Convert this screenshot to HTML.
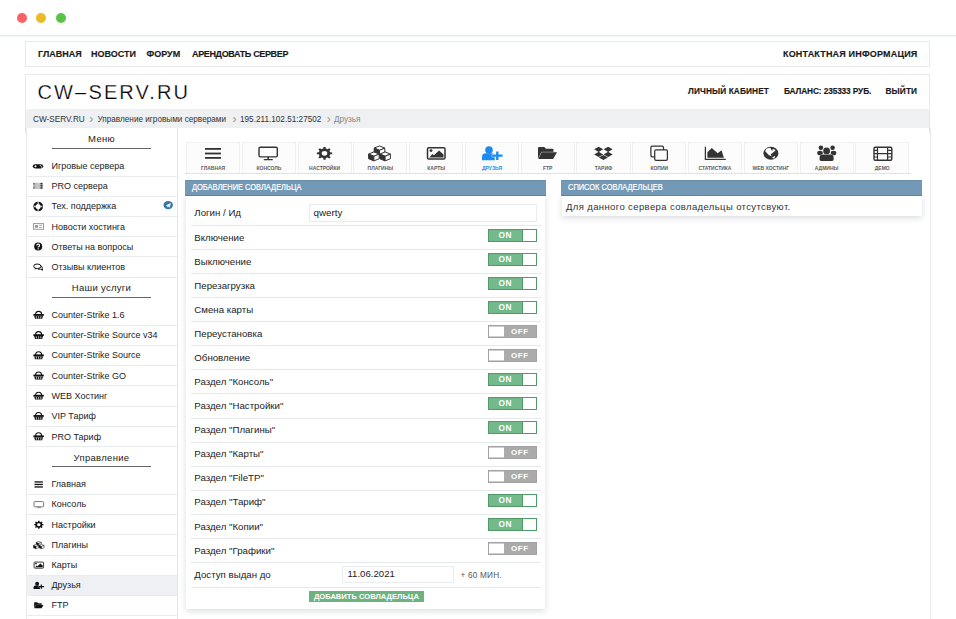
<!DOCTYPE html>
<html><head><meta charset="utf-8">
<style>
*{box-sizing:border-box;margin:0;padding:0}
html,body{width:956px;height:619px;overflow:hidden;background:#fff;font-family:"Liberation Sans",sans-serif;color:#222}
.a{position:absolute;white-space:nowrap}
.dot{position:absolute;top:12.6px;width:10.4px;height:10.4px;border-radius:50%}
.nv{position:absolute;font-weight:bold;font-size:9px;color:#1a1a1a;white-space:nowrap;line-height:10px;-webkit-text-stroke:0.15px #1a1a1a}
.hl{position:absolute;font-weight:bold;font-size:8.3px;color:#1a1a1a;white-space:nowrap;line-height:10px;letter-spacing:0.1px;-webkit-text-stroke:0.15px #1a1a1a}
.bc{position:absolute;font-size:8.2px;color:#333;white-space:nowrap;line-height:10px}
.sh{position:absolute;left:26px;width:151px;text-align:center;font-size:9.5px;letter-spacing:0.3px;color:#222;line-height:12px}
.ul{position:absolute;left:52px;width:99px;height:1.5px;background:#666}
.st{position:absolute;left:51.5px;font-size:9px;color:#222;white-space:nowrap;line-height:10px}
.tab{position:absolute;top:142px;width:54.2px;height:30.6px;background:#fcfcfc;border:1px solid #f0f0f0;border-bottom:none}
.tl{position:absolute;top:165px;font-size:5px;font-weight:bold;color:#555;text-align:center;width:54.2px;line-height:6px}
.ph{position:absolute;top:180.3px;height:15.6px;background:#7399b6;border-top:1px solid #6a90ad;border-bottom:1px solid #5c83a2;color:#fff;white-space:nowrap}
.ph span{position:absolute;left:7px;top:0.2px;font-size:8.4px;line-height:13px;transform:scaleX(0.89);transform-origin:0 0;-webkit-text-stroke:0.2px #fff}
.pb{position:absolute;background:#fff;box-shadow:0 1.5px 6px rgba(30,45,60,0.17)}
.rl{position:absolute;left:194.3px;font-size:9.7px;color:#222;white-space:nowrap;line-height:10px}
.sep{position:absolute;left:191px;width:350px;height:1px;background:#e6e9ec}
.tg{position:absolute;left:488px;width:49px;height:13px}
.on{background:#73b98a;border:1px solid #4f9a66}
.on .k{position:absolute;right:0;top:0;width:14px;height:100%;background:#fff;border-left:1px solid #4f9a66}
.on span{position:absolute;left:-1px;top:0.3px;width:34px;text-align:center;color:#fff;font-weight:bold;font-size:8.3px;letter-spacing:0.7px;line-height:11px;text-indent:0.7px}
.off{background:#ababab;border:1px solid #a2a2a2}
.off .k{position:absolute;left:0;top:0;width:14.5px;height:100%;background:#fff;border-top:1px solid #d0d0d0;border-bottom:1px solid #d0d0d0}
.off span{position:absolute;right:0;width:33px;text-align:center;color:#fff;font-weight:bold;font-size:8px;letter-spacing:0.6px;line-height:11px;text-indent:0.6px}
.inp{position:absolute;background:#fff;border:1px solid #e9ecf0}
</style></head>
<body>
<div class="dot" style="left:16.8px;background:#fe6163"></div>
<div class="dot" style="left:35.8px;background:#ecbb22"></div>
<div class="dot" style="left:55.9px;background:#5ac544"></div>
<div class="a" style="left:0;top:35px;width:956px;height:1px;background:#e6e7e9"></div>
<div class="a" style="left:0;top:36px;width:956px;height:1px;background:#f0f5fa"></div>

<div class="a" style="left:25px;top:41px;width:905px;height:26px;border:1px solid #e9e9e9"></div>
<span class="nv" style="left:38px;top:48.6px">ГЛАВНАЯ</span>
<span class="nv" style="left:91px;top:48.6px">НОВОСТИ</span>
<span class="nv" style="left:146.5px;top:48.6px">ФОРУМ</span>
<span class="nv" style="left:192px;top:48.6px;letter-spacing:-0.35px">АРЕНДОВАТЬ СЕРВЕР</span>
<span class="nv" style="left:783px;top:48.6px;letter-spacing:0.18px">КОНТАКТНАЯ ИНФОРМАЦИЯ</span>

<div class="a" style="left:25px;top:74px;width:905px;height:60px;border:1px solid #e9e9e9;border-bottom:none"></div>
<div class="a" style="left:26px;top:128px;width:905px;height:600px;border:1px solid #e9e9e9;border-top:none"></div>
<span class="a" style="left:37.5px;top:80px;font-size:20px;letter-spacing:2.15px;color:#000;line-height:24px;-webkit-text-stroke:0.25px #fff">CW–SERV.RU</span>
<span class="hl" style="left:688px;top:86px">ЛИЧНЫЙ КАБИНЕТ</span>
<span class="hl" style="left:784px;top:86px;letter-spacing:-0.12px">БАЛАНС: 235333 РУБ.</span>
<span class="hl" style="left:885.5px;top:86px">ВЫЙТИ</span>

<div class="a" style="left:26px;top:109px;width:903px;height:19px;background:#eef0f1"></div>
<span class="bc" style="left:33px;top:114.5px">CW-SERV.RU</span>
<span class="bc" style="left:89.3px;top:114.5px;color:#999;font-size:12px;top:113.5px">&#8250;</span>
<span class="bc" style="left:97.5px;top:114.5px">Управление игровыми серверами</span>
<span class="bc" style="left:232.5px;top:114.5px;color:#999;font-size:12px;top:113.5px">&#8250;</span>
<span class="bc" style="left:240px;top:114.5px">195.211.102.51:27502</span>
<span class="bc" style="left:326.8px;top:114.5px;color:#999;font-size:12px;top:113.5px">&#8250;</span>
<span class="bc" style="left:334px;top:114.5px;color:#888">Друзья</span>

<div class="a" style="left:177px;top:128px;width:1px;height:500px;background:#e6e6e6"></div>

<div class="sh" style="top:133.3px">Меню</div>
<div class="ul" style="top:147.5px"></div>
<div class="a" style="left:26px;top:175.7px;width:151px;height:1px;background:#e9edf0"></div>
<span class="st" style="top:161px">Игровые сервера</span>
<div class="a" style="left:26px;top:195.9px;width:151px;height:1px;background:#e9edf0"></div>
<span class="st" style="top:181px">PRO сервера</span>
<div class="a" style="left:26px;top:216.1px;width:151px;height:1px;background:#e9edf0"></div>
<span class="st" style="top:201px">Тех. поддержка</span>
<div class="a" style="left:26px;top:236.2px;width:151px;height:1px;background:#e9edf0"></div>
<span class="st" style="top:222px">Новости хостинга</span>
<div class="a" style="left:26px;top:256.3px;width:151px;height:1px;background:#e9edf0"></div>
<span class="st" style="top:242px">Ответы на вопросы</span>
<div class="a" style="left:26px;top:276.5px;width:151px;height:1px;background:#e9edf0"></div>
<span class="st" style="top:262px">Отзывы клиентов</span>
<div class="sh" style="top:282.3px">Наши услуги</div>
<div class="ul" style="top:296.5px"></div>
<div class="a" style="left:26px;top:324.8px;width:151px;height:1px;background:#e9edf0"></div>
<span class="st" style="top:310px">Counter-Strike 1.6</span>
<div class="a" style="left:26px;top:345.0px;width:151px;height:1px;background:#e9edf0"></div>
<span class="st" style="top:330px">Counter-Strike Source v34</span>
<div class="a" style="left:26px;top:365.2px;width:151px;height:1px;background:#e9edf0"></div>
<span class="st" style="top:350px">Counter-Strike Source</span>
<div class="a" style="left:26px;top:385.4px;width:151px;height:1px;background:#e9edf0"></div>
<span class="st" style="top:371px">Counter-Strike GO</span>
<div class="a" style="left:26px;top:405.6px;width:151px;height:1px;background:#e9edf0"></div>
<span class="st" style="top:391px">WEB Хостинг</span>
<div class="a" style="left:26px;top:425.9px;width:151px;height:1px;background:#e9edf0"></div>
<span class="st" style="top:411px">VIP Тариф</span>
<div class="a" style="left:26px;top:446.2px;width:151px;height:1px;background:#e9edf0"></div>
<span class="st" style="top:432px">PRO Тариф</span>
<div class="sh" style="top:452.0px">Управление</div>
<div class="ul" style="top:465.9px"></div>
<div class="a" style="left:26px;top:493.9px;width:151px;height:1px;background:#e9edf0"></div>
<span class="st" style="top:479px">Главная</span>
<div class="a" style="left:26px;top:514.1px;width:151px;height:1px;background:#e9edf0"></div>
<span class="st" style="top:499px">Консоль</span>
<div class="a" style="left:26px;top:534.3px;width:151px;height:1px;background:#e9edf0"></div>
<span class="st" style="top:520px">Настройки</span>
<div class="a" style="left:26px;top:554.5px;width:151px;height:1px;background:#e9edf0"></div>
<span class="st" style="top:540px">Плагины</span>
<div class="a" style="left:26px;top:574.7px;width:151px;height:1px;background:#e9edf0"></div>
<span class="st" style="top:560px">Карты</span>
<div class="a" style="left:26px;top:575.7px;width:151px;height:19.2px;background:#eef0f4"></div>
<div class="a" style="left:26px;top:594.9px;width:151px;height:1px;background:#e9edf0"></div>
<span class="st" style="top:580px">Друзья</span>
<div class="a" style="left:26px;top:614.8px;width:151px;height:1px;background:#e9edf0"></div>
<span class="st" style="top:600px">FTP</span>
<div class="tab" style="left:186.0px"></div>
<div class="tl" style="left:186.0px;color:#606060">ГЛАВНАЯ</div>
<div class="tab" style="left:241.8px"></div>
<div class="tl" style="left:241.8px;color:#606060">КОНСОЛЬ</div>
<div class="tab" style="left:297.5px"></div>
<div class="tl" style="left:297.5px;color:#606060">НАСТРОЙКИ</div>
<div class="tab" style="left:353.3px"></div>
<div class="tl" style="left:353.3px;color:#606060">ПЛАГИНЫ</div>
<div class="tab" style="left:409.1px"></div>
<div class="tl" style="left:409.1px;color:#606060">КАРТЫ</div>
<div class="tab" style="left:464.9px"></div>
<div class="tl" style="left:464.9px;color:#2a8de3">ДРУЗЬЯ</div>
<div class="tab" style="left:520.6px"></div>
<div class="tl" style="left:520.6px;color:#606060">FTP</div>
<div class="tab" style="left:576.4px"></div>
<div class="tl" style="left:576.4px;color:#606060">ТАРИФ</div>
<div class="tab" style="left:632.2px"></div>
<div class="tl" style="left:632.2px;color:#606060">КОПИИ</div>
<div class="tab" style="left:687.9px"></div>
<div class="tl" style="left:687.9px;color:#606060">СТАТИСТИКА</div>
<div class="tab" style="left:743.7px"></div>
<div class="tl" style="left:743.7px;color:#606060">WEB ХОСТИНГ</div>
<div class="tab" style="left:799.5px"></div>
<div class="tl" style="left:799.5px;color:#606060">АДМИНЫ</div>
<div class="tab" style="left:855.2px"></div>
<div class="tl" style="left:855.2px;color:#606060">ДЕМО</div>
<div class="a" style="left:185px;top:172.6px;width:725.8px;height:1.6px;background:#e2e2e2"></div>
<svg class="a" style="left:0;top:0;width:956px;height:619px" viewBox="0 0 956 619"><g style="color:#333"><g fill="currentColor"><rect x="205" y="148.0" width="16" height="1.8"/><rect x="205" y="152.6" width="16" height="1.8"/><rect x="205" y="157.0" width="16" height="1.8"/></g></g><g style="color:#333"><rect x="259" y="147.3" width="18.3" height="9.6" rx="1.3" fill="none" stroke="currentColor" stroke-width="1.4"/><rect x="267.4" y="156.9" width="1.6" height="2.3" fill="currentColor"/><rect x="263.7" y="158.9" width="9.2" height="1.4" rx="0.6" fill="currentColor"/></g><g style="color:#333"><path transform="translate(324.5 153.3) scale(1.17 0.97) translate(-324.5 -153.3)" d="M323.41 148.42 L323.57 146.77 L325.43 146.77 L325.59 148.42 L327.18 149.08 L328.46 148.02 L329.78 149.34 L328.72 150.62 L329.38 152.21 L331.03 152.37 L331.03 154.23 L329.38 154.39 L328.72 155.98 L329.78 157.26 L328.46 158.58 L327.18 157.52 L325.59 158.18 L325.43 159.83 L323.57 159.83 L323.41 158.18 L321.82 157.52 L320.54 158.58 L319.22 157.26 L320.28 155.98 L319.62 154.39 L317.97 154.23 L317.97 152.37 L319.62 152.21 L320.28 150.62 L319.22 149.34 L320.54 148.02 L321.82 149.08 Z M326.90 153.30 A2.4 2.4 0 1 0 322.10 153.30 A2.4 2.4 0 1 0 326.90 153.30 Z" fill="currentColor" fill-rule="evenodd"/></g><g style="color:#333"><path d="M379.5 145.9 L384.8 148.1 L379.5 150.3 L374.2 148.1 Z" fill="#fff" stroke="currentColor" stroke-width="1.0" stroke-linejoin="round"/><path d="M374.2 148.1 L379.5 150.3 L379.5 154.9 L374.2 152.7 Z" fill="currentColor" stroke="currentColor" stroke-width="1.0" stroke-linejoin="round"/><path d="M379.5 150.3 L384.8 148.1 L384.8 152.7 L379.5 154.9 Z" fill="#fff" stroke="currentColor" stroke-width="1.0" stroke-linejoin="round"/><path d="M373.9 151.9 L379.2 154.1 L373.9 156.3 L368.59999999999997 154.1 Z" fill="#fff" stroke="currentColor" stroke-width="1.0" stroke-linejoin="round"/><path d="M368.59999999999997 154.1 L373.9 156.3 L373.9 160.9 L368.59999999999997 158.7 Z" fill="currentColor" stroke="currentColor" stroke-width="1.0" stroke-linejoin="round"/><path d="M373.9 156.3 L379.2 154.1 L379.2 158.7 L373.9 160.9 Z" fill="#fff" stroke="currentColor" stroke-width="1.0" stroke-linejoin="round"/><path d="M385.1 151.9 L390.40000000000003 154.1 L385.1 156.3 L379.8 154.1 Z" fill="#fff" stroke="currentColor" stroke-width="1.0" stroke-linejoin="round"/><path d="M379.8 154.1 L385.1 156.3 L385.1 160.9 L379.8 158.7 Z" fill="currentColor" stroke="currentColor" stroke-width="1.0" stroke-linejoin="round"/><path d="M385.1 156.3 L390.40000000000003 154.1 L390.40000000000003 158.7 L385.1 160.9 Z" fill="#fff" stroke="currentColor" stroke-width="1.0" stroke-linejoin="round"/></g><g style="color:#333"><rect x="427.5" y="147.7" width="17.5" height="11.3" rx="1.3" fill="none" stroke="currentColor" stroke-width="1.5"/><circle cx="431" cy="150.6" r="1.45" fill="currentColor"/><path d="M429.3 157.4 L432.4 154.1 L433.9 155.2 L439.1 150.5 L443.5 154.4 L443.5 157.4 Z" fill="currentColor"/></g><g style="color:#1a8cf0"><g fill="currentColor"><circle cx="489" cy="150" r="3.8"/><path d="M482 160.3 L482 157.2 Q482 153.4 485.8 153.3 L491.5 153.3 Q494.8 153.4 494.8 156.5 L494.8 160.3 Z"/></g><path d="M496.1 151.5 h2.4 v2.9 h4.1 v2.4 h-4.1 v3.2 h-2.4 v-3.2 h-3.9 v-2.4 h3.9 Z" fill="currentColor" stroke="#fff" stroke-width="0.9" paint-order="stroke"/></g><g style="color:#333"><path d="M538 159 L538 148 Q538 146.9 539.1 146.9 L544.3 146.9 L546 148.7 L552.4 148.7 Q553.5 148.7 553.5 149.9 L553.5 152.2 L542 152.2 L538.4 159 Z" fill="currentColor"/><path d="M541.6 152.3 L557.1 152.3 L553.1 159.1 L538.4 159.1 Z" fill="currentColor" stroke="#fff" stroke-width="0.8" paint-order="stroke"/></g><g style="color:#333"><g fill="currentColor" transform="translate(603.4 0) scale(1.1 1) translate(-603.4 0)"><path d="M595 149.3 L599.1 146.7 L603.2 149.3 L599.1 151.9 Z"/><path d="M603.6 149.3 L607.7 146.7 L611.8 149.3 L607.7 151.9 Z"/><path d="M595 154.0 L599.1 151.4 L603.2 154.0 L599.1 156.6 Z" transform="translate(0 0.4)"/><path d="M603.6 154.0 L607.7 151.4 L611.8 154.0 L607.7 156.6 Z" transform="translate(0 0.4)"/><path d="M599.3 157.6 L603.4 155.0 L607.5 157.6 L603.4 160.1 Z"/></g></g><g style="color:#333"><rect x="650.9" y="146.2" width="12.6" height="10.7" rx="1.3" fill="none" stroke="currentColor" stroke-width="1.25"/><rect x="654.7" y="149.9" width="12.7" height="10.4" rx="1.3" fill="#fcfcfc" stroke="currentColor" stroke-width="1.25"/></g><g style="color:#333"><path d="M705.4 146.7 V159.3 H725.8" fill="none" stroke="currentColor" stroke-width="1.3"/><path d="M707.4 157.8 L707.4 152.3 L711.8 148.1 L717.7 153.2 L721.5 150.2 L723.9 157.8 Z" fill="currentColor"/></g><g style="color:#333"><ellipse cx="770.9" cy="153.25" rx="7.5" ry="6.5" fill="currentColor"/><path d="M765.2 151.2 L766.2 148.8 L769.6 147.8 L771 148.4 L771.2 150.1 L772.7 150.7 L772.5 148.9 L774.6 149.5 L775.5 150.6 L771.9 153.4 L770.6 154.5 L771.8 156.4 L768.7 154.9 Z" fill="#fcfcfc"/><path d="M772 157.5 L775.3 155.8 L774.2 158.7 Z" fill="#fcfcfc"/></g><g style="color:#333"><g fill="currentColor"><circle cx="820.9" cy="147.7" r="2.3"/><circle cx="832.6" cy="147.7" r="2.3"/><ellipse cx="820" cy="153" rx="2.8" ry="2.3"/><ellipse cx="833.5" cy="153" rx="2.8" ry="2.3"/></g><g fill="currentColor" stroke="#fcfcfc" stroke-width="1" paint-order="stroke"><circle cx="826.6" cy="151" r="3.4"/><path d="M819.6 159.5 L819.6 157.6 Q819.6 154.6 822.8 154.6 L830.4 154.6 Q833.6 154.6 833.6 157.6 L833.6 159.5 Q833.6 160.9 832.2 160.9 L821 160.9 Q819.6 160.9 819.6 159.5 Z"/></g></g><g style="color:#333"><rect x="874" y="147.3" width="17.8" height="12.9" rx="1.2" fill="none" stroke="currentColor" stroke-width="1.4"/><path d="M877.5 147.3 V160.2 M887.6 147.3 V160.2 M877.5 153.7 H887.6 M874 150.4 H877.5 M874 153.7 H877.5 M874 157.0 H877.5 M887.6 150.4 H891.8 M887.6 153.7 H891.8 M887.6 157.0 H891.8" stroke="currentColor" stroke-width="1.2"/></g><path d="M35.2 164.2 H40.8 Q43.2 164.2 43.2 166.3 Q43.2 168.4 40.8 168.4 H35.2 Q32.8 168.4 32.8 166.3 Q32.8 164.2 35.2 164.2 Z" fill="#111"/><path d="M34.3 166.3 H36.7 M35.5 165.2 V167.4" stroke="#fff" stroke-width="0.8"/><circle cx="40.3" cy="165.7" r="0.6" fill="#fff"/><circle cx="41.6" cy="166.9" r="0.6" fill="#fff"/><rect x="33.2" y="182.9" width="9.8" height="5.8" fill="#a8a8a8"/><rect x="35.2" y="182.9" width="5.2" height="5.8" fill="#c4c4c4"/><g fill="#222"><rect x="40.6" y="182.9" width="1.6" height="1.3"/><rect x="40.6" y="185.2" width="1.6" height="1.3"/><rect x="40.6" y="187.4" width="1.6" height="1.3"/></g><g fill="#666"><rect x="33.2" y="182.9" width="1.2" height="1.3"/><rect x="33.2" y="187.4" width="1.2" height="1.3"/></g><circle cx="38.2" cy="206.5" r="3.7" fill="none" stroke="#111" stroke-width="2.3"/><path d="M38.2 202.2 V204.3 M38.2 208.7 V210.8 M33.9 206.5 H36 M40.4 206.5 H42.5" stroke="#c8c8c8" stroke-width="1.6"/><rect x="33.5" y="223.6" width="10" height="5.7" fill="none" stroke="#9a9a9a" stroke-width="1"/><rect x="35" y="225" width="3" height="2.8" fill="#9a9a9a"/><path d="M39 225.3 H42 M39 227.4 H42" stroke="#9a9a9a" stroke-width="0.8"/><circle cx="38.2" cy="246.6" r="4" fill="#111"/><path d="M36.8 245.6 Q36.8 244.1 38.2 244.1 Q39.6 244.1 39.6 245.4 Q39.6 246.3 38.2 246.9 V247.6" fill="none" stroke="#fff" stroke-width="1.1"/><rect x="37.6" y="248.3" width="1.2" height="1.1" fill="#fff"/><ellipse cx="37.3" cy="266.3" rx="3.6" ry="2.3" fill="none" stroke="#111" stroke-width="1"/><path d="M35.2 268.3 L34.4 269.8 L36.8 268.6" fill="#111"/><path d="M40.6 265.6 Q42.6 266.6 42.2 268.3 L42.6 270.2 L40.6 269.2 Q39.2 269.5 38 269" fill="none" stroke="#111" stroke-width="1"/><path d="M35.6 314.6 Q35.6 311.40000000000003 38.6 311.40000000000003 Q41.6 311.40000000000003 41.6 314.6" fill="none" stroke="#111" stroke-width="1.1"/><rect x="33.4" y="314.00000000000006" width="10.4" height="1.8" fill="#111"/><path d="M34.2 315.8 H43 L42.2 318.8 H35 Z" fill="#111"/><path d="M36.4 316.20000000000005 V318.40000000000003 M38.6 316.20000000000005 V318.40000000000003 M40.8 316.20000000000005 V318.40000000000003" stroke="#fff" stroke-width="0.7"/><path d="M35.6 334.79999999999995 Q35.6 331.59999999999997 38.6 331.59999999999997 Q41.6 331.59999999999997 41.6 334.79999999999995" fill="none" stroke="#111" stroke-width="1.1"/><rect x="33.4" y="334.2" width="10.4" height="1.8" fill="#111"/><path d="M34.2 335.99999999999994 H43 L42.2 338.99999999999994 H35 Z" fill="#111"/><path d="M36.4 336.4 V338.59999999999997 M38.6 336.4 V338.59999999999997 M40.8 336.4 V338.59999999999997" stroke="#fff" stroke-width="0.7"/><path d="M35.6 355.0 Q35.6 351.8 38.6 351.8 Q41.6 351.8 41.6 355.0" fill="none" stroke="#111" stroke-width="1.1"/><rect x="33.4" y="354.40000000000003" width="10.4" height="1.8" fill="#111"/><path d="M34.2 356.2 H43 L42.2 359.2 H35 Z" fill="#111"/><path d="M36.4 356.6 V358.8 M38.6 356.6 V358.8 M40.8 356.6 V358.8" stroke="#fff" stroke-width="0.7"/><path d="M35.6 375.19999999999993 Q35.6 371.99999999999994 38.6 371.99999999999994 Q41.6 371.99999999999994 41.6 375.19999999999993" fill="none" stroke="#111" stroke-width="1.1"/><rect x="33.4" y="374.59999999999997" width="10.4" height="1.8" fill="#111"/><path d="M34.2 376.3999999999999 H43 L42.2 379.3999999999999 H35 Z" fill="#111"/><path d="M36.4 376.79999999999995 V378.99999999999994 M38.6 376.79999999999995 V378.99999999999994 M40.8 376.79999999999995 V378.99999999999994" stroke="#fff" stroke-width="0.7"/><path d="M35.6 395.4 Q35.6 392.2 38.6 392.2 Q41.6 392.2 41.6 395.4" fill="none" stroke="#111" stroke-width="1.1"/><rect x="33.4" y="394.8" width="10.4" height="1.8" fill="#111"/><path d="M34.2 396.59999999999997 H43 L42.2 399.59999999999997 H35 Z" fill="#111"/><path d="M36.4 397.0 V399.2 M38.6 397.0 V399.2 M40.8 397.0 V399.2" stroke="#fff" stroke-width="0.7"/><path d="M35.6 415.65 Q35.6 412.45 38.6 412.45 Q41.6 412.45 41.6 415.65" fill="none" stroke="#111" stroke-width="1.1"/><rect x="33.4" y="415.05" width="10.4" height="1.8" fill="#111"/><path d="M34.2 416.84999999999997 H43 L42.2 419.84999999999997 H35 Z" fill="#111"/><path d="M36.4 417.25 V419.45 M38.6 417.25 V419.45 M40.8 417.25 V419.45" stroke="#fff" stroke-width="0.7"/><path d="M35.6 435.94999999999993 Q35.6 432.74999999999994 38.6 432.74999999999994 Q41.6 432.74999999999994 41.6 435.94999999999993" fill="none" stroke="#111" stroke-width="1.1"/><rect x="33.4" y="435.34999999999997" width="10.4" height="1.8" fill="#111"/><path d="M34.2 437.1499999999999 H43 L42.2 440.1499999999999 H35 Z" fill="#111"/><path d="M36.4 437.54999999999995 V439.74999999999994 M38.6 437.54999999999995 V439.74999999999994 M40.8 437.54999999999995 V439.74999999999994" stroke="#fff" stroke-width="0.7"/><g fill="#111"><rect x="34.5" y="481.3" width="8.4" height="1.3"/><rect x="34.5" y="483.8" width="8.4" height="1.3"/><rect x="34.5" y="486.3" width="8.4" height="1.3"/></g><rect x="34" y="501.6" width="9.6" height="5.2" rx="0.8" fill="none" stroke="#777" stroke-width="1"/><rect x="38.4" y="506.8" width="0.9" height="0.9" fill="#777"/><rect x="36.8" y="507.4" width="4.1" height="0.7" fill="#777"/><g style="color:#111" transform="translate(38.8 524.70) scale(0.62) translate(-324.5 -153.3)"><path transform="translate(324.5 153.3) scale(1.17 0.97) translate(-324.5 -153.3)" d="M323.41 148.42 L323.57 146.77 L325.43 146.77 L325.59 148.42 L327.18 149.08 L328.46 148.02 L329.78 149.34 L328.72 150.62 L329.38 152.21 L331.03 152.37 L331.03 154.23 L329.38 154.39 L328.72 155.98 L329.78 157.26 L328.46 158.58 L327.18 157.52 L325.59 158.18 L325.43 159.83 L323.57 159.83 L323.41 158.18 L321.82 157.52 L320.54 158.58 L319.22 157.26 L320.28 155.98 L319.62 154.39 L317.97 154.23 L317.97 152.37 L319.62 152.21 L320.28 150.62 L319.22 149.34 L320.54 148.02 L321.82 149.08 Z M326.90 153.30 A2.4 2.4 0 1 0 322.10 153.30 A2.4 2.4 0 1 0 326.90 153.30 Z" fill="currentColor" fill-rule="evenodd"/></g><g style="color:#111" transform="translate(38.8 544.90) scale(0.49) translate(-379.5 -153.0)"><path d="M379.5 145.9 L384.8 148.1 L379.5 150.3 L374.2 148.1 Z" fill="#fff" stroke="currentColor" stroke-width="1.0" stroke-linejoin="round"/><path d="M374.2 148.1 L379.5 150.3 L379.5 154.9 L374.2 152.7 Z" fill="currentColor" stroke="currentColor" stroke-width="1.0" stroke-linejoin="round"/><path d="M379.5 150.3 L384.8 148.1 L384.8 152.7 L379.5 154.9 Z" fill="#fff" stroke="currentColor" stroke-width="1.0" stroke-linejoin="round"/><path d="M373.9 151.9 L379.2 154.1 L373.9 156.3 L368.59999999999997 154.1 Z" fill="#fff" stroke="currentColor" stroke-width="1.0" stroke-linejoin="round"/><path d="M368.59999999999997 154.1 L373.9 156.3 L373.9 160.9 L368.59999999999997 158.7 Z" fill="currentColor" stroke="currentColor" stroke-width="1.0" stroke-linejoin="round"/><path d="M373.9 156.3 L379.2 154.1 L379.2 158.7 L373.9 160.9 Z" fill="#fff" stroke="currentColor" stroke-width="1.0" stroke-linejoin="round"/><path d="M385.1 151.9 L390.40000000000003 154.1 L385.1 156.3 L379.8 154.1 Z" fill="#fff" stroke="currentColor" stroke-width="1.0" stroke-linejoin="round"/><path d="M379.8 154.1 L385.1 156.3 L385.1 160.9 L379.8 158.7 Z" fill="currentColor" stroke="currentColor" stroke-width="1.0" stroke-linejoin="round"/><path d="M385.1 156.3 L390.40000000000003 154.1 L390.40000000000003 158.7 L385.1 160.9 Z" fill="#fff" stroke="currentColor" stroke-width="1.0" stroke-linejoin="round"/></g><g style="color:#111" transform="translate(38.8 565.10) scale(0.54) translate(-436.2 -153.3)"><rect x="427.5" y="147.7" width="17.5" height="11.3" rx="1.3" fill="none" stroke="currentColor" stroke-width="1.5"/><circle cx="431" cy="150.6" r="1.45" fill="currentColor"/><path d="M429.3 157.4 L432.4 154.1 L433.9 155.2 L439.1 150.5 L443.5 154.4 L443.5 157.4 Z" fill="currentColor"/></g><g style="color:#111" transform="translate(38.8 585.30) scale(0.51) translate(-492.3 -153.0)"><g fill="currentColor"><circle cx="489" cy="150" r="3.8"/><path d="M482 160.3 L482 157.2 Q482 153.4 485.8 153.3 L491.5 153.3 Q494.8 153.4 494.8 156.5 L494.8 160.3 Z"/></g><path d="M496.1 151.5 h2.4 v2.9 h4.1 v2.4 h-4.1 v3.2 h-2.4 v-3.2 h-3.9 v-2.4 h3.9 Z" fill="currentColor" stroke="#fff" stroke-width="0.9" paint-order="stroke"/></g><g style="color:#111" transform="translate(38.8 605.35) scale(0.49) translate(-547.5 -153.0)"><path d="M538 159 L538 148 Q538 146.9 539.1 146.9 L544.3 146.9 L546 148.7 L552.4 148.7 Q553.5 148.7 553.5 149.9 L553.5 152.2 L542 152.2 L538.4 159 Z" fill="currentColor"/><path d="M541.6 152.3 L557.1 152.3 L553.1 159.1 L538.4 159.1 Z" fill="currentColor" stroke="#fff" stroke-width="0.8" paint-order="stroke"/></g><ellipse cx="168.2" cy="205.1" rx="4.75" ry="4.1" fill="#3776ab"/><path d="M165.8 205.4 L170.8 202.9 L169.8 207.6 L168.1 206.5 L167.3 207.5 L167.1 206 Z" fill="#fff"/></svg>
<div class="pb" style="left:186.3px;top:195px;width:358.8px;height:414.2px"></div>
<div class="ph" style="left:185.2px;width:360.7px;"><span>ДОБАВЛЕНИЕ СОВЛАДЕЛЬЦА</span></div>
<div class="pb" style="left:561.5px;top:195px;width:360.5px;height:21.3px"></div>
<div class="ph" style="left:561px;width:361px;"><span>СПИСОК СОВЛАДЕЛЬЦЕВ</span></div>
<span class="a" style="left:566px;top:202px;font-size:9.5px;letter-spacing:0.38px;color:#333;line-height:10px">Для данного сервера совладельцы отсутсвуют.</span>
<span class="rl" style="top:208px">Логин / Ид</span>
<div class="inp" style="left:309px;top:204px;width:228px;height:17.5px"></div>
<span class="a" style="left:313.5px;top:207.5px;font-size:9.8px;color:#222;line-height:10px">qwerty</span>
<div class="sep" style="top:225.0px"></div>
<span class="rl" style="top:232.6px">Включение</span>
<div class="tg on" style="top:228.9px"><span>ON</span><div class="k"></div></div>
<div class="sep" style="top:249.3px"></div>
<span class="rl" style="top:256.9px">Выключение</span>
<div class="tg on" style="top:253.2px"><span>ON</span><div class="k"></div></div>
<div class="sep" style="top:273.3px"></div>
<span class="rl" style="top:280.9px">Перезагрузка</span>
<div class="tg on" style="top:277.2px"><span>ON</span><div class="k"></div></div>
<div class="sep" style="top:297.3px"></div>
<span class="rl" style="top:304.9px">Смена карты</span>
<div class="tg on" style="top:301.2px"><span>ON</span><div class="k"></div></div>
<div class="sep" style="top:321.3px"></div>
<span class="rl" style="top:328.9px">Переустановка</span>
<div class="tg off" style="top:325.3px"><div class="k"></div><span>OFF</span></div>
<div class="sep" style="top:345.4px"></div>
<span class="rl" style="top:353.0px">Обновление</span>
<div class="tg off" style="top:349.4px"><div class="k"></div><span>OFF</span></div>
<div class="sep" style="top:369.3px"></div>
<span class="rl" style="top:376.9px">Раздел "Консоль"</span>
<div class="tg on" style="top:373.2px"><span>ON</span><div class="k"></div></div>
<div class="sep" style="top:393.3px"></div>
<span class="rl" style="top:400.9px">Раздел "Настройки"</span>
<div class="tg on" style="top:397.2px"><span>ON</span><div class="k"></div></div>
<div class="sep" style="top:417.5px"></div>
<span class="rl" style="top:425.1px">Раздел "Плагины"</span>
<div class="tg on" style="top:421.4px"><span>ON</span><div class="k"></div></div>
<div class="sep" style="top:441.5px"></div>
<span class="rl" style="top:449.1px">Раздел "Карты"</span>
<div class="tg off" style="top:445.5px"><div class="k"></div><span>OFF</span></div>
<div class="sep" style="top:465.5px"></div>
<span class="rl" style="top:473.1px">Раздел "FileTP"</span>
<div class="tg off" style="top:469.5px"><div class="k"></div><span>OFF</span></div>
<div class="sep" style="top:489.8px"></div>
<span class="rl" style="top:497.4px">Раздел "Тариф"</span>
<div class="tg on" style="top:493.7px"><span>ON</span><div class="k"></div></div>
<div class="sep" style="top:513.9px"></div>
<span class="rl" style="top:521.5px">Раздел "Копии"</span>
<div class="tg on" style="top:517.8px"><span>ON</span><div class="k"></div></div>
<div class="sep" style="top:538.0px"></div>
<span class="rl" style="top:545.6px">Раздел "Графики"</span>
<div class="tg off" style="top:542.0px"><div class="k"></div><span>OFF</span></div>
<div class="sep" style="top:562.4px"></div>
<span class="rl" style="top:569.8px">Доступ выдан до</span>
<div class="inp" style="left:342.4px;top:566.3px;width:112px;height:16.8px"></div>
<span class="a" style="left:347.5px;top:569px;font-size:9.6px;color:#222;line-height:10px">11.06.2021</span>
<span class="a" style="left:460.6px;top:571px;font-size:8.2px;letter-spacing:0.2px;color:#555;line-height:10px">+ 60 МИН.</span>
<div class="sep" style="top:587.2px"></div>
<div class="a" style="left:309.1px;top:590.7px;width:114.6px;height:11.6px;background:#6db380;color:#fff;font-weight:bold;font-size:7.6px;line-height:11.6px;text-align:center">ДОБАВИТЬ СОВЛАДЕЛЬЦА</div>
</body></html>
